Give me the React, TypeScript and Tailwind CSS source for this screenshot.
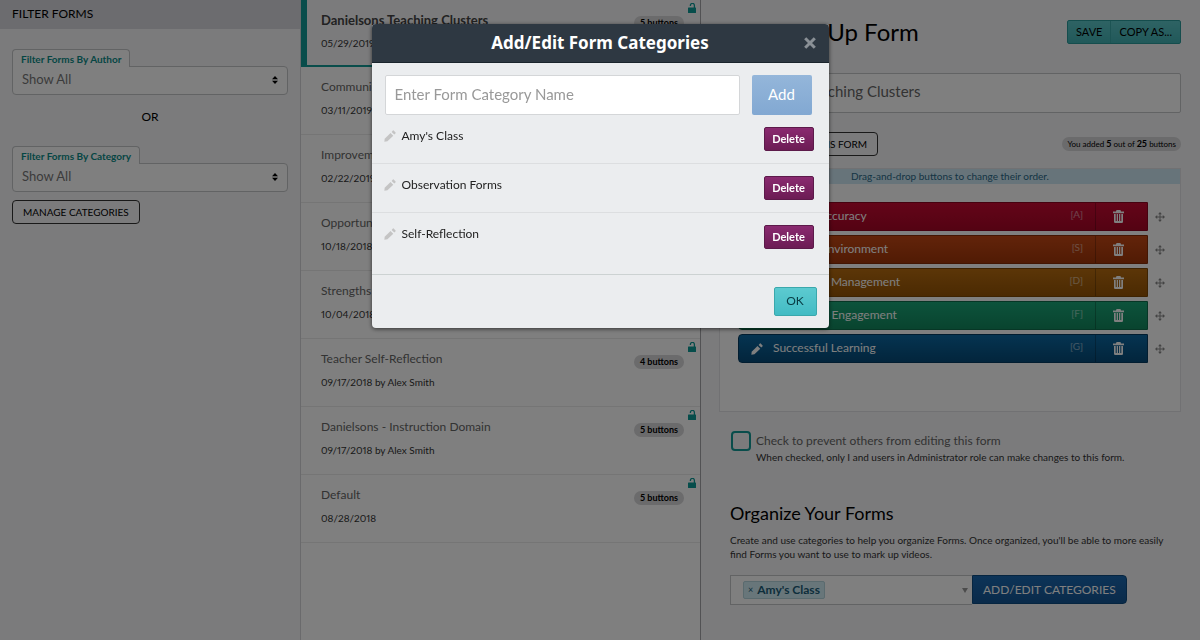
import clsx from "clsx";

const FORMS = [
  { title: "Danielsons Teaching Clusters", meta: "05/29/2019 by Alex Smith", count: 5, active: true },
  { title: "Communication Skills", meta: "03/11/2019 by Alex Smith", count: 5 },
  { title: "Improvement Areas", meta: "02/22/2019 by Alex Smith", count: 5 },
  { title: "Opportunities", meta: "10/18/2018 by Alex Smith", count: 5 },
  { title: "Strengths", meta: "10/04/2018 by Alex Smith", count: 4 },
  { title: "Teacher Self-Reflection", meta: "09/17/2018 by Alex Smith", count: 4 },
  { title: "Danielsons - Instruction Domain", meta: "09/17/2018 by Alex Smith", count: 5 },
  { title: "Default", meta: "08/28/2018", count: 5 },
];

const MARKUP_BUTTONS = [
  { label: "Content Accuracy", hotkey: "A", color: "from-[#c80a32] to-[#a80626] border-[#8c0520]" },
  { label: "Learning Environment", hotkey: "S", color: "from-[#c54814] to-[#a23609] border-[#862c06]" },
  { label: "Classroom Management", hotkey: "D", color: "from-[#b86c10] to-[#965405] border-[#7c4604]" },
  { label: "Behavioral Engagement", hotkey: "F", color: "from-[#1aa678] to-[#12885e] border-[#0e6e4c]" },
  { label: "Successful Learning", hotkey: "G", color: "from-[#0b68a2] to-[#064a78] border-[#053a60]" },
];

const CATEGORIES = ["Amy's Class", "Observation Forms", "Self-Reflection"];

function PencilIcon({ className }: { className?: string }) {
  return (
    <svg viewBox="0 0 14 14" className={className} fill="currentColor" aria-hidden>
      <path d="M0.4 13.6 L0.8 10.2 L7.6 3.4 L10.8 6.6 L4 13.2 Z" />
      <path d="M8.9 2.2 L10.4 0.6 Q10.8 0.2 11.3 0.7 L13.5 2.9 Q14 3.4 13.5 3.8 L12 5.3 Z" />
    </svg>
  );
}

function TrashIcon({ className }: { className?: string }) {
  return (
    <svg viewBox="0 0 11 13" className={className} fill="currentColor" aria-hidden>
      <path d="M3 1.4Q3 0 4.2 0h2.6Q8 0 8 1.4h3v1.8H0V1.4z" />
      <path
        fillRule="evenodd"
        d="M1 4h9v7.8q0 1.2-1.2 1.2H2.2Q1 13 1 11.8zM2.7 4v7h1V4zM5 4v7h1V4zM7.3 4v7h1V4z"
      />
    </svg>
  );
}

function UnlockIcon({ className }: { className?: string }) {
  return (
    <svg viewBox="0 0 8 10" className={className} aria-hidden>
      <path d="M2.4 3V2.4a2 2 0 0 1 4 0V5" fill="none" stroke="currentColor" strokeWidth="1.3" />
      <rect x="0" y="4.6" width="8" height="5.4" rx="0.5" fill="currentColor" />
    </svg>
  );
}

function MoveIcon({ className }: { className?: string }) {
  return (
    <svg viewBox="0 0 10 10" className={className} fill="currentColor" aria-hidden>
      <path d="M4.5 1.5h1v7h-1zM1.5 4.5h7v1h-7z" />
      <path d="M5 0l1.9 2.2H3.1zM5 10l1.9-2.2H3.1zM0 5l2.2-1.9v3.8zM10 5L7.8 3.1v3.8z" />
    </svg>
  );
}

function FilterSelect({ id, label }: { id: string; label: string }) {
  return (
    <div>
      <label
        htmlFor={id}
        className="relative z-10 -mb-px block h-[18px] w-fit rounded-t-sm border border-b-0 border-[#c4c6c8] bg-white px-2 text-[10px] leading-[19px] font-bold text-[#0b8c88]"
      >
        {label}
      </label>
      <div className="relative">
        <select
          id={id}
          className="block h-[29px] w-full appearance-none rounded-sm rounded-tl-none border border-[#c4c6c8] bg-white px-[9px] pb-px text-[13px] text-[#777]"
        >
          <option>Show All</option>
        </select>
        <svg viewBox="0 0 6 8" className="pointer-events-none absolute top-[10px] right-[10px] h-2 w-[6px]" aria-hidden>
          <path d="M3 0L6 3.2H0zM3 8L0 4.8h6z" />
        </svg>
      </div>
    </div>
  );
}

function Sidebar() {
  return (
    <aside className="bg-[#f6f6f8]">
      <h2 className="h-[29px] bg-[#d8d8de] px-3 text-[12px] leading-[28px]">FILTER FORMS</h2>
      <div className="px-3 pt-5">
        <FilterSelect id="by-author" label="Filter Forms By Author" />
        <p className="py-3 text-center text-[12px] leading-[19px]">OR</p>
        <div className="pt-2">
          <FilterSelect id="by-category" label="Filter Forms By Category" />
        </div>
        <button className="mt-2 h-6 rounded-sm border border-[#333] px-[10px] text-[10px] leading-none">
          MANAGE CATEGORIES
        </button>
      </div>
    </aside>
  );
}

function FormList() {
  return (
    <ul className="border-l border-[#d4d4d8] bg-white">
      {FORMS.map((form) => (
        <li
          key={form.title}
          className={clsx(
            "relative flex items-start justify-between pt-[11px] pr-4",
            form.active
              ? "h-[67px] border-b-2 border-l-6 border-[#129a96] bg-[#f6f6f8] pl-[14px]"
              : "h-[68px] border-b border-[#eaeaea] pl-5"
          )}
        >
          <div>
            <h3 className={clsx("leading-[18px]", form.active ? "text-[13px] font-bold text-[#444]" : "text-[12px] text-[#666]")}>
              {form.title}
            </h3>
            <p className="mt-[7px] text-[10px] leading-[14px] text-[#333] proportional-nums">{form.meta}</p>
          </div>
          <span className="mt-[5px] rounded-full bg-[#d6d6d8] px-[6px] text-[9px] leading-[14px] font-bold">
            {form.count} buttons
          </span>
          <UnlockIcon className="absolute top-[3px] right-1 h-[10px] w-2 text-[#0c9a96]" />
        </li>
      ))}
    </ul>
  );
}

function MarkupButtons() {
  return (
    <div className="mt-3 border border-[#e2e2e6] bg-white">
      <p className="h-[15px] bg-[#cfe8f4] text-center text-[10px] leading-[14px] text-[#2a6a88]">
        Drag-and-drop buttons to change their order.
      </p>
      <ul className="space-y-1 pt-[18px] pr-[15px] pb-12 pl-[18px]">
        {MARKUP_BUTTONS.map((item) => (
          <li key={item.hotkey} className="flex items-center gap-[7px]">
            <div className={clsx("flex h-[29px] grow rounded-l-sm border bg-linear-to-b text-white", item.color)}>
              <button className="flex grow items-center gap-[10px] pl-3 text-[12px]">
                <PencilIcon className="size-3" />
                <span className="pb-px">{item.label}</span>
                <span className="ml-auto pr-3 pb-1 text-[10px] opacity-50">[{item.hotkey}]</span>
              </button>
              <button
                aria-label={`Remove ${item.label}`}
                className="flex w-[52px] items-center justify-center border-l border-black/25 pr-[6px]"
              >
                <TrashIcon className="h-[13px] w-[11px]" />
              </button>
            </div>
            <MoveIcon className="size-[10px] text-[#888]" />
          </li>
        ))}
      </ul>
    </div>
  );
}

function Editor() {
  return (
    <main className="border-l border-[#a4a4a8] bg-[#f6f6f8] pr-[19px] pl-[18px]">
      <div className="flex items-start justify-between pt-5">
        <h1 className="text-[24px] leading-6">Edit Mark Up Form</h1>
        <div className="flex rounded-xs border border-[#2a9a9a] bg-linear-to-b from-[#5cc6c8] to-[#42b2b4] text-[11px] leading-[22px]">
          <button className="px-2">SAVE</button>
          <button className="border-l border-[#3aa8a8] px-2">COPY AS...</button>
        </div>
      </div>
      <input
        aria-label="Form name"
        defaultValue="Danielsons Teaching Clusters"
        className="mt-[29px] block h-10 w-full rounded-xs border border-[#c4c6c8] bg-white px-[10px] pb-1 text-[15px] text-[#666]"
      />
      <div className="mt-[19px] flex items-center justify-between">
        <button className="h-6 rounded-sm border border-[#333] px-[10px] text-[10px] leading-none">
          ADD BUTTON TO THIS FORM
        </button>
        <span className="rounded-full bg-[#d6d6d8] px-[5px] text-[8px] leading-[14px]">
          You added <b className="text-[9px]">5</b> out of <b className="text-[9px]">25</b> buttons
        </span>
      </div>
      <MarkupButtons />
      <div className="mt-[19px] flex gap-[5px] px-3">
        <input
          id="lock-form"
          type="checkbox"
          className="size-5 appearance-none rounded-sm border-2 border-[#129a96]"
        />
        <div>
          <label htmlFor="lock-form" className="block text-[12px] leading-5 text-[#666]">
            Check to prevent others from editing this form
          </label>
          <p className="text-[10px] leading-3 text-[#333]">
            When checked, only I and users in Administrator role can make changes to this form.
          </p>
        </div>
      </div>
      <section className="mt-[38px] px-[11px]">
        <h2 className="text-[18px] leading-6">Organize Your Forms</h2>
        <p className="mt-2 text-[10px] leading-[14px] text-[#333]">
          Create and use categories to help you organize Forms. Once organized, you'll be able to more easily
          <br />
          find Forms you want to use to mark up videos.
        </p>
        <div className="mt-[14px] flex">
          <div className="flex h-[30px] w-[242px] items-center justify-between border border-r-0 border-[#c4c6c8] bg-white pr-1 pl-3">
            <span className="flex h-[18px] items-center gap-1 rounded-xs border border-[#b4d4dc] bg-[#d0ecf4] px-1 text-[12px] font-bold text-[#1c5c78]">
              <button aria-label="Remove Amy's Class" className="text-[9px] font-normal">×</button>
              Amy's Class
            </span>
            <svg viewBox="0 0 6 5" className="h-[5px] w-[6px] text-[#999]" fill="currentColor" aria-hidden>
              <path d="M0 0h6L3 5z" />
            </svg>
          </div>
          <button className="h-[29px] rounded-r-sm border border-[#0c4a80] bg-linear-to-b from-[#1a68b0] to-[#145594] px-[10px] text-[12px] text-white">
            ADD/EDIT CATEGORIES
          </button>
        </div>
      </section>
    </main>
  );
}

function CategoriesDialog() {
  return (
    <div className="fixed inset-0 z-20 flex items-start justify-center bg-black/50 pt-6">
      <div
        role="dialog"
        aria-labelledby="dialog-title"
        className="w-[457px] overflow-hidden rounded-sm bg-[#ebedef] shadow-[0_1px_4px_rgba(0,0,0,0.6)]"
      >
        <header className="relative flex h-[39px] items-center justify-center border-b border-[#1a242c] bg-[#2e3842]">
          <h2 id="dialog-title" className="font-['Noto_Sans'] text-[17px] font-bold text-white">
            Add/Edit Form Categories
          </h2>
          <button aria-label="Close" className="absolute right-[13px] text-[#8a9096]">
            <svg viewBox="0 0 12 12" className="size-3" stroke="currentColor" strokeWidth="3" aria-hidden>
              <path d="M1.2 1.2l9.6 9.6M10.8 1.2l-9.6 9.6" />
            </svg>
          </button>
        </header>
        <form className="flex gap-3 pt-3 pr-[17px] pl-[13px]">
          <input
            aria-label="Form category name"
            placeholder="Enter Form Category Name"
            className="h-10 min-w-0 grow rounded-xs border border-[#d4d6d8] bg-white px-[9px] pb-[3px] text-[15px] placeholder:text-[#999]"
          />
          <button type="button" className="h-10 w-[60px] rounded-xs bg-linear-to-b from-[#94b6da] to-[#82a8d2] pb-px text-[15px] text-white">
            Add
          </button>
        </form>
        <ul className="pb-3">
          {CATEGORIES.map((name) => (
            <li key={name} className="flex h-[49px] items-start justify-between border-b border-[#dcdee0] pt-3 pr-[15px] pl-3 last:border-0">
              <span className="flex items-center gap-[6px] text-[12px] leading-[18px] text-[#222]">
                <PencilIcon className="size-3 text-[#c4c4c4]" />
                {name}
              </span>
              <button className="h-6 w-[50px] rounded-xs border border-[#5c1a4a] bg-linear-to-b from-[#8a2a70] to-[#6c1c54] pb-px text-[11px] leading-none font-bold text-white">
                Delete
              </button>
            </li>
          ))}
        </ul>
        <footer className="flex justify-end border-t border-[#ccd2d2] p-3">
          <button className="h-[29px] w-[43px] rounded-xs border border-[#3aa8ac] bg-linear-to-b from-[#5ccad0] to-[#42bcc4] pb-px text-[12px] text-[#083c44]">
            OK
          </button>
        </footer>
      </div>
    </div>
  );
}

export default function App() {
  return (
    <div className="grid min-h-screen grid-cols-[3fr_4fr_5fr] bg-white font-['Lato',sans-serif] text-black">
      <Sidebar />
      <FormList />
      <Editor />
      <CategoriesDialog />
    </div>
  );
}
